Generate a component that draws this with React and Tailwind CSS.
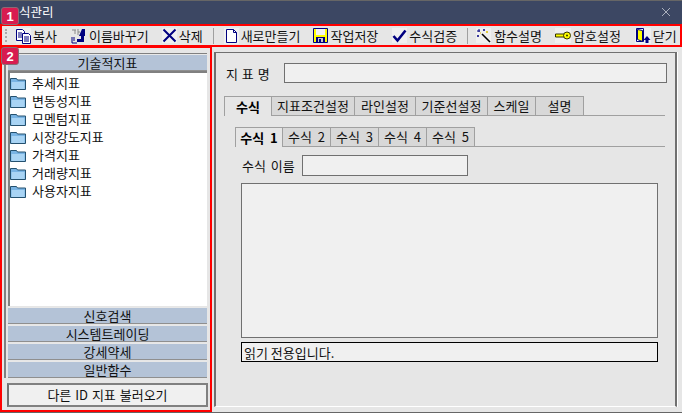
const KR = "font-['Noto_Sans_CJK_KR',sans-serif]";

function CopyIcon() {
  return (
    <svg width="15" height="16" viewBox="0 0 15 16" className="shrink-0 bg-[#f0f0f0]">
      <path d="M0.5 1.5h6l2 2v9h-8z" fill="#fff" stroke="#000080" />
      <path d="M2 5h4M2 7h4M2 9h4" stroke="#000080" />
      <path d="M6.5 5.5h6l2 2v8h-8z" fill="#fff" stroke="#000080" />
      <path d="M8 9h5M8 11h5M8 13h5" stroke="#000080" />
    </svg>
  );
}

function RenameIcon() {
  return (
    <svg width="15" height="16" viewBox="0 0 15 16" className="mr-px shrink-0">
      <path d="M1 2h4M4 2v4M7 1v6M7 4h2" stroke="#8a8a8a" fill="none" />
      <path d="M1 9v6h5M3 9v4" stroke="#000080" fill="none" />
      <path d="M11 1h3v7h-1v6H6v-3h4V8H8z" fill="#000080" />
    </svg>
  );
}

function DeleteIcon() {
  return (
    <svg width="15" height="15" viewBox="0 0 15 15" className="shrink-0 bg-[#f0f0f0]">
      <path d="M1.5 1.5l12 12M13.5 1.5l-12 12" stroke="#000080" strokeWidth="2" />
    </svg>
  );
}

function NewIcon() {
  return (
    <svg width="15" height="16" viewBox="0 0 15 16" className="shrink-0 bg-[#f0f0f0]">
      <path d="M2.5 1.5h7l3 3v10h-10z" fill="#fff" stroke="#000080" />
      <path d="M9.5 1.5v3h3" fill="none" stroke="#000080" />
    </svg>
  );
}

function SaveIcon() {
  return (
    <svg width="15" height="15" viewBox="0 0 15 15" className="shrink-0">
      <path d="M0.5 0.5h14v14h-14z" fill="#ffff00" stroke="#000080" />
      <path d="M3 1h9v6H3z" fill="#f4f4f4" />
      <path d="M3 9h9v5H3z" fill="#000080" />
      <path d="M5 10h5v4H5z" fill="#c8c8c8" />
      <path d="M6 11h2v3H6z" fill="#000080" />
    </svg>
  );
}

function CheckIcon() {
  return (
    <svg width="15" height="15" viewBox="0 0 15 15" className="shrink-0 bg-[#f0f0f0]">
      <path d="M1.5 8l4 4.5L13.5 2.5" fill="none" stroke="#000080" strokeWidth="2.6" />
    </svg>
  );
}

function WandIcon() {
  return (
    <svg width="15" height="15" viewBox="0 0 15 15" className="mr-px shrink-0 bg-[#f0f0f0]">
      <path d="M6 6l8 8" stroke="#000" strokeWidth="1.6" />
      <path d="M3 1v3M1 3h3M8 1v2M7 2h2M1 8h2M2 7v2" stroke="#000080" />
      <path d="M10 4h2M11 3v2M4 5h1" stroke="#e0c000" />
    </svg>
  );
}

function KeyIcon() {
  return (
    <svg width="16" height="15" viewBox="0 0 16 15" className="shrink-0 bg-[#f0f0f0]">
      <path d="M0.5 6h9v3h-9z" fill="#ffff00" stroke="#333300" />
      <circle cx="12" cy="7.5" r="3.5" fill="#ffff00" stroke="#333300" />
      <circle cx="12" cy="7.5" r="1" fill="#333300" />
    </svg>
  );
}

function CloseIcon() {
  return (
    <svg width="16" height="16" viewBox="0 0 16 16" className="shrink-0 bg-[#f0f0f0]">
      <path d="M1.5 0.5h7v13h-7z" fill="#fff" stroke="#000080" />
      <path d="M2.5 1.5l5 1v11l-5-2z" fill="#ffff00" stroke="#000080" />
      <path d="M12 8l3.5 4h-2v3h-3v-3h-2z" fill="#000080" />
    </svg>
  );
}

function FolderIcon() {
  return (
    <svg width="16" height="12" viewBox="0 0 16 12" className="shrink-0">
      <path d="M0.5 2V0.5h6l1 1.5h8v9.500h-15z" fill="#79b4e4" stroke="#24516f" />
      <path d="M1.500 4h13v7h-13z" fill="#a9d4f4" />
    </svg>
  );
}

function ToolItem({ icon, label, className = '' }) {
  return (
    <div className={`flex items-center gap-[2px] ${className}`}>
      {icon}
      <span className="whitespace-nowrap pb-[1px]">{label}</span>
    </div>
  );
}

function Toolbar() {
  return (
    <div className={`flex h-[23px] items-center border-2 border-[#ff0000] bg-[#e6e6e6] pl-[3px] text-[13px] leading-none text-[#111] ${KR}`}>
      <div className="mr-[9px] h-[13px] w-[2px] border-l-2 border-dotted border-[#aaa]" />
      <div className="flex items-center gap-[14px]">
        <ToolItem icon={<CopyIcon />} label="복사" />
        <ToolItem icon={<RenameIcon />} label="이름바꾸기" className="-mr-px" />
        <ToolItem icon={<DeleteIcon />} label="삭제" />
      </div>
      <div className="mx-[10px] h-[16px] w-px bg-[#a0a0a0]" />
      <div className="flex items-center gap-[14px]">
        <ToolItem icon={<NewIcon />} label="새로만들기" className="-mr-px" />
        <ToolItem icon={<SaveIcon />} label="작업저장" />
        <ToolItem icon={<CheckIcon />} label="수식검증" />
      </div>
      <div className="ml-[10px] mr-[8px] h-[16px] w-px bg-[#a0a0a0]" />
      <div className="flex items-center gap-[14px]">
        <ToolItem icon={<WandIcon />} label="함수설명" className="-mr-px" />
        <ToolItem icon={<KeyIcon />} label="암호설정" />
        <ToolItem icon={<CloseIcon />} label="닫기" />
      </div>
    </div>
  );
}

function SectionBar({ label }) {
  return (
    <div className="flex h-[17px] items-center justify-center border-t border-[#e8e8e8] border-b border-b-[#8f8f8f] bg-[#b4c3d7] text-[13px] leading-none text-[#111]">
      {label}
    </div>
  );
}

const folders = ['추세지표', '변동성지표', '모멘텀지표', '시장강도지표', '가격지표', '거래량지표', '사용자지표'];

function LeftPanel() {
  return (
    <aside className={`flex h-[366px] w-[212px] shrink-0 flex-col border-2 border-[#ff0000] bg-[#e6e6e6] ${KR}`}>
      <div className="ml-[2px] mr-[3px] mt-[5px] border-l-2 border-t border-[#808080] pl-[2px]">
        <div className="flex flex-col">
          <SectionBar label="기술적지표" />
          <div className="flex h-[235px] flex-col gap-[4px] border-l-2 border-t-2 border-[#808080] bg-white pt-[4px] text-[13px] leading-none text-[#111]">
            {folders.map((name) => (
              <div key={name} className="flex h-[14px] items-center gap-[6px]">
                <FolderIcon />
                <span className="mb-[4px]">{name}</span>
              </div>
            ))}
          </div>
          <div className="mt-[1px] flex flex-col gap-[1px]">
            <SectionBar label="신호검색" />
            <SectionBar label="시스템트레이딩" />
            <SectionBar label="강세약세" />
            <SectionBar label="일반함수" />
          </div>
        </div>
      </div>
      <button className="ml-[5px] mt-[5px] h-[24px] w-[201px] border-2 border-[#808080] border-l-[#707070] bg-[#f0f0f0] pb-[1px] text-[13px] leading-none text-[#111] [word-spacing:1px]">
        다른 ID 지표 불러오기
      </button>
    </aside>
  );
}

function Tab({ label, width, active }) {
  return (
    <div
      style={{ width }}
      className={`flex h-[20px] items-center justify-center border-t border-r border-[#a0a0a0] pb-[1px] [word-spacing:3px] ${
        active ? 'border-l bg-[#e6e6e6] font-bold text-black' : 'border-b bg-[#d8d8d8] text-[#111]'
      }`}
    >
      {label}
    </div>
  );
}

const mainTabs = [
  ['수식', 48],
  ['지표조건설정', 83],
  ['라인설정', 61],
  ['기준선설정', 72],
  ['스케일', 48],
  ['설명', 48],
];

const subTabs = ['수식 1', '수식 2', '수식 3', '수식 4', '수식 5'];

function RightPanel() {
  return (
    <main className={`ml-[2px] mt-[6px] h-[355px] w-[463px] border-l-2 border-r-2 border-t border-b border-[#707070] border-b-white bg-[#e6e6e6] text-[13px] leading-none text-[#111] shadow-[1px_0_0_#fff] ${KR}`}>
      <div className="mt-[10px] flex h-[20px] items-center pl-[10px]">
        <span className="w-[58px] [word-spacing:1px]">지 표 명</span>
        <div className="h-[20px] w-[383px] border border-[#707070] bg-[#f0f0f0]" />
      </div>
      <div className="ml-[8px] mr-[10px] mt-[13px]">
        <div className="flex">
          {mainTabs.map(([label, width], i) => (
            <Tab key={label} label={label} width={width} active={i === 0} />
          ))}
          <div className="flex-1 border-b border-[#a0a0a0]" />
        </div>
        <div className="mt-[11px] pl-[11px]">
          <div className="flex">
            {subTabs.map((label, i) => (
              <Tab key={label} label={label} width={48} active={i === 0} />
            ))}
            <div className="flex-1 border-b border-[#a0a0a0]" />
          </div>
          <div className="mt-[8px] flex h-[21px] items-center pl-[7px]">
            <span className="w-[60px] [word-spacing:2px]">수식 이름</span>
            <div className="h-[21px] w-[166px] border border-[#707070] bg-[#f0f0f0]" />
          </div>
          <div className="ml-[6px] mt-[7px] h-[155px] w-[417px] border border-[#707070] bg-[#f0f0f0]" />
          <div className="ml-[6px] mt-[4px] flex h-[20px] w-[417px] items-center border border-black bg-[#f0f0f0] pl-[2px]">
            읽기 전용입니다.
          </div>
        </div>
      </div>
    </main>
  );
}

function Badge({ n, top }) {
  return (
    <div style={{ top }} className="absolute left-[1px] flex h-[18px] w-[18px] items-center justify-center rounded-[3px] border border-[#8a6a74] bg-[#d81b50] font-['Liberation_Sans',sans-serif] text-[13px] font-bold leading-none text-white">
      {n}
    </div>
  );
}

export default function App() {
  return (
    <div className="relative h-[413px] w-[682px] overflow-hidden bg-[#e6e6e6]">
      <div className={`flex h-[24px] items-center justify-between border-t border-[#666] bg-[#3c4763] pb-[1px] pl-[19px] pr-[11px] text-[12.5px] leading-none text-white ${KR}`}>
        <span>식관리</span>
        <svg width="10" height="10" viewBox="0 0 10 10">
          <path d="M1 1l8 8M9 1L1 9" stroke="#aab0bd" strokeWidth="1" />
        </svg>
      </div>
      <Toolbar />
      <div className="-mt-[1px] flex h-[367px] border-b border-[#666]">
        <LeftPanel />
        <RightPanel />
      </div>
      <Badge n="1" top={7} />
      <Badge n="2" top={47} />
    </div>
  );
}
